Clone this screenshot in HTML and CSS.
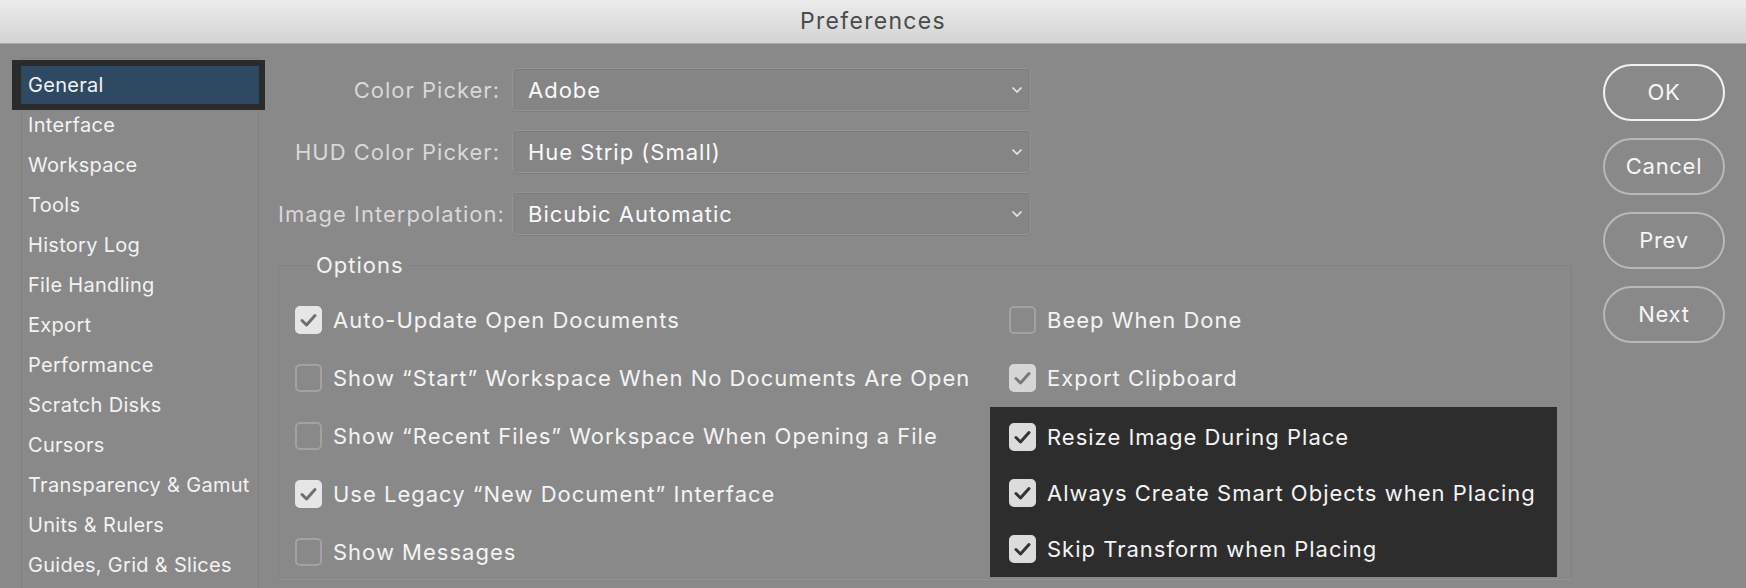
FILE: index.html
```html
<!DOCTYPE html>
<html>
<head>
<meta charset="utf-8">
<title>Preferences</title>
<link rel="stylesheet" href="styles.css">
</head>
<body>
<div class="window">
  <div class="titlebar">Preferences</div>
  <div class="main">
    <div class="sidebar">
      <div class="nav-item selected">General</div>
      <div class="nav-item">Interface</div>
      <div class="nav-item">Workspace</div>
      <div class="nav-item">Tools</div>
      <div class="nav-item">History Log</div>
      <div class="nav-item">File Handling</div>
      <div class="nav-item">Export</div>
      <div class="nav-item">Performance</div>
      <div class="nav-item">Scratch Disks</div>
      <div class="nav-item">Cursors</div>
      <div class="nav-item">Transparency &amp; Gamut</div>
      <div class="nav-item">Units &amp; Rulers</div>
      <div class="nav-item">Guides, Grid &amp; Slices</div>
    </div>

    <div class="content">
      <div class="form-row">
        <div class="form-label">Color Picker:</div>
        <div class="select"><span>Adobe</span><svg class="chev" width="12" height="8" viewBox="0 0 12 8"><polyline points="1.5,1.5 6,6 10.5,1.5" fill="none" stroke="#e6e6e6" stroke-width="1.7"/></svg></div>
      </div>
      <div class="form-row">
        <div class="form-label">HUD Color Picker:</div>
        <div class="select"><span>Hue Strip (Small)</span><svg class="chev" width="12" height="8" viewBox="0 0 12 8"><polyline points="1.5,1.5 6,6 10.5,1.5" fill="none" stroke="#e6e6e6" stroke-width="1.7"/></svg></div>
      </div>
      <div class="form-row">
        <div class="form-label">Image Interpolation:</div>
        <div class="select"><span>Bicubic Automatic</span><svg class="chev" width="12" height="8" viewBox="0 0 12 8"><polyline points="1.5,1.5 6,6 10.5,1.5" fill="none" stroke="#e6e6e6" stroke-width="1.7"/></svg></div>
      </div>

      <fieldset class="options">
        <legend>Options</legend>
        <div class="opt-grid">
          <div class="opt left r1"><span class="cb on"><svg width="27" height="28" viewBox="0 0 27 28"><polyline points="7,14.5 11.5,19 20,9.5" fill="none" stroke="#6f6f6f" stroke-width="3" stroke-linecap="round" stroke-linejoin="round"/></svg></span><span>Auto-Update Open Documents</span></div>
          <div class="opt left r2"><span class="cb"></span><span>Show “Start” Workspace When No Documents Are Open</span></div>
          <div class="opt left r3"><span class="cb"></span><span>Show “Recent Files” Workspace When Opening a File</span></div>
          <div class="opt left r4"><span class="cb on"><svg width="27" height="28" viewBox="0 0 27 28"><polyline points="7,14.5 11.5,19 20,9.5" fill="none" stroke="#6f6f6f" stroke-width="3" stroke-linecap="round" stroke-linejoin="round"/></svg></span><span>Use Legacy “New Document” Interface</span></div>
          <div class="opt left r5"><span class="cb"></span><span>Show Messages</span></div>

          <div class="opt right r1"><span class="cb"></span><span>Beep When Done</span></div>
          <div class="opt right r2"><span class="cb on faded"><svg width="27" height="28" viewBox="0 0 27 28"><polyline points="7,14.5 11.5,19 20,9.5" fill="none" stroke="#7a7a7a" stroke-width="3" stroke-linecap="round" stroke-linejoin="round"/></svg></span><span>Export Clipboard</span></div>
          <div class="highlight">
            <div class="opt"><span class="cb on dark"><svg width="27" height="28" viewBox="0 0 27 28"><polyline points="7,14.5 11.5,19 20,9.5" fill="none" stroke="#333" stroke-width="3" stroke-linecap="round" stroke-linejoin="round"/></svg></span><span>Resize Image During Place</span></div>
            <div class="opt"><span class="cb on dark"><svg width="27" height="28" viewBox="0 0 27 28"><polyline points="7,14.5 11.5,19 20,9.5" fill="none" stroke="#333" stroke-width="3" stroke-linecap="round" stroke-linejoin="round"/></svg></span><span>Always Create Smart Objects when Placing</span></div>
            <div class="opt"><span class="cb on dark"><svg width="27" height="28" viewBox="0 0 27 28"><polyline points="7,14.5 11.5,19 20,9.5" fill="none" stroke="#333" stroke-width="3" stroke-linecap="round" stroke-linejoin="round"/></svg></span><span>Skip Transform when Placing</span></div>
          </div>
        </div>
      </fieldset>
    </div>

    <div class="buttons">
      <div class="btn primary">OK</div>
      <div class="btn">Cancel</div>
      <div class="btn">Prev</div>
      <div class="btn">Next</div>
    </div>
  </div>
</div>
</body>
</html>
```

FILE: styles.css
```css
html, body {
  margin: 0;
  padding: 0;
  width: 1746px;
  height: 588px;
  overflow: hidden;
  background: #898989;
  font-family: Inter, Roboto, "Liberation Sans", sans-serif;
}

.window {
  width: 1746px;
  height: 588px;
  display: flex;
  flex-direction: column;
  overflow: hidden;
}

.titlebar {
  height: 43px;
  flex: 0 0 43px;
  background: linear-gradient(#ececec, #d3d3d3);
  border-bottom: 1px solid #a9a9a9;
  color: #4b4b4b;
  font-size: 23px;
  letter-spacing: 1.3px;
  line-height: 43px;
  text-align: center;
}

.main {
  flex: 1;
  display: flex;
  align-items: flex-start;
  background: #898989;
  padding-left: 21px;
  overflow: hidden;
}

/* sidebar */
.sidebar {
  width: 238px;
  box-sizing: border-box;
  margin-top: 14px;
  border: 1px solid #7f7f7f;
  border-bottom: none;
  padding-top: 6px;
  height: 530px;
}

.nav-item {
  height: 40px;
  line-height: 40px;
  padding-left: 6px;
  color: #f3f3f3;
  font-size: 20px;
  letter-spacing: 0.3px;
  white-space: nowrap;
}

.nav-item.selected {
  background: #2e4a63;
  height: 38px;
  line-height: 38px;
  margin: -5px -7px -5px -10px;
  border: 6px solid #2b2b2b;
  border-left-width: 9px;
  border-right-width: 6px;
  padding-left: 7px;
}

/* content */
.content {
  width: 1294px;
  margin-left: 19px;
  padding-top: 24px;
}

.form-row {
  display: flex;
  align-items: center;
  height: 43px;
  margin-bottom: 19px;
}

.form-label {
  width: 222px;
  margin-right: 12px;
  text-align: right;
  color: #d8d8d8;
  font-size: 22px;
  letter-spacing: 1px;
  white-space: nowrap;
}

.select {
  width: 495px;
  height: 41px;
  border: 1px solid #939393;
  border-radius: 3px;
  background: #858585;
  box-shadow: inset 0 1px 0 #7c7c7c, 0 1px 0 #7f7f7f;
  display: flex;
  align-items: center;
  justify-content: space-between;
  padding: 0 7px 0 15px;
  box-sizing: content-box;
  color: #fafafa;
  font-size: 22px;
  letter-spacing: 1px;
}

.select span {
  white-space: nowrap;
}

.chev {
  display: block;
}

/* options */
.options {
  margin: 14px 0 0 0;
  padding: 0;
  border: 1px solid #818181;
  border-bottom: 1px solid #939393;
  height: 326px;
  box-sizing: border-box;
  min-width: 0;
}

.options legend {
  margin-left: 32px;
  padding: 0 5px;
  color: #f3f3f3;
  font-size: 22px;
  letter-spacing: 1px;
  line-height: 22px;
}

.opt-grid {
  display: grid;
  grid-template-columns: 711px 567px;
  grid-template-rows: repeat(5, 58px);
  margin-top: 15px;
}

.opt {
  display: flex;
  align-items: center;
  height: 58px;
  color: #f4f4f4;
  font-size: 22px;
  letter-spacing: 1px;
  white-space: nowrap;
}

.opt.left { grid-column: 1; padding-left: 16px; }
.opt.right { grid-column: 2; padding-left: 19px; }
.r1 { grid-row: 1; }
.r2 { grid-row: 2; }
.r3 { grid-row: 3; }
.r4 { grid-row: 4; }
.r5 { grid-row: 5; }

.highlight {
  grid-column: 2;
  grid-row: 3 / span 3;
  background: #2d2d2d;
  padding-left: 19px;
  padding-top: 2px;
  height: 170px;
  box-sizing: border-box;
}

.highlight .opt {
  height: 56px;
}

.cb {
  width: 23px;
  height: 24px;
  flex: 0 0 auto;
  border: 2px solid #a2a2a2;
  border-radius: 5px;
  margin-right: 11px;
  position: relative;
}

.cb.on {
  border-color: #e6e6e6;
  background: #e6e6e6;
}

.cb.faded {
  border-color: #d6d6d6;
  background: #d6d6d6;
}

.cb.dark {
  border-color: #dcdcdc;
  background: #dcdcdc;
}

.cb svg {
  position: absolute;
  left: -2px;
  top: -2px;
}

/* buttons */
.buttons {
  width: 122px;
  margin-left: 31px;
  margin-top: 20px;
  display: flex;
  flex-direction: column;
  gap: 17px;
}

.btn {
  height: 53px;
  border: 2px solid #b8b8b8;
  border-radius: 29px;
  color: #f6f6f6;
  font-size: 22px;
  letter-spacing: 0.7px;
  line-height: 53px;
  text-align: center;
}

.btn.primary {
  border-color: #f2f2f2;
}
```
